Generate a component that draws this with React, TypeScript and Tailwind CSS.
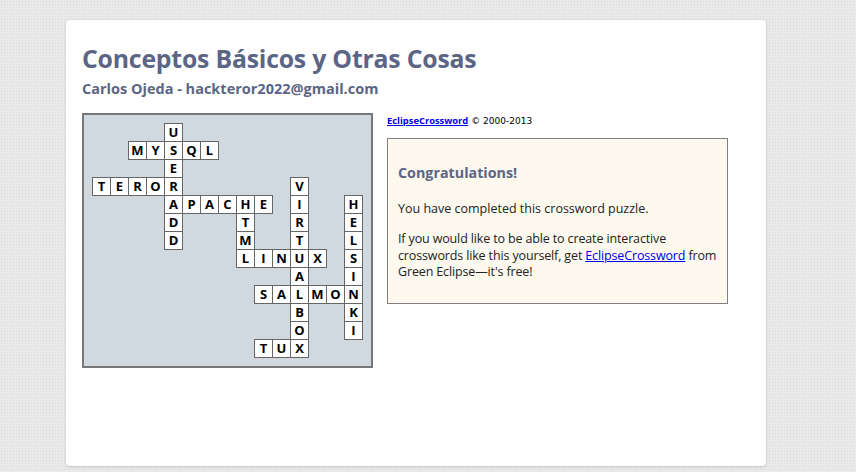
type Cell = { r: number; c: number; ch: string };

const words: { row: number; col: number; dir: 'across' | 'down'; text: string }[] = [
  { row: 0, col: 4, dir: 'down', text: 'USERADD' },
  { row: 1, col: 2, dir: 'across', text: 'MYSQL' },
  { row: 3, col: 0, dir: 'across', text: 'TEROR' },
  { row: 4, col: 4, dir: 'across', text: 'APACHE' },
  { row: 4, col: 8, dir: 'down', text: 'HTML' },
  { row: 7, col: 8, dir: 'across', text: 'LINUX' },
  { row: 3, col: 11, dir: 'down', text: 'VIRTUALBOX' },
  { row: 4, col: 14, dir: 'down', text: 'HELSINKI' },
  { row: 9, col: 9, dir: 'across', text: 'SALMON' },
  { row: 12, col: 9, dir: 'across', text: 'TUX' },
];

function buildCells(): Cell[] {
  const map = new Map<string, Cell>();
  for (const w of words) {
    w.text.split('').forEach((ch, i) => {
      const r = w.dir === 'down' ? w.row + i : w.row;
      const c = w.dir === 'across' ? w.col + i : w.col;
      map.set(`${r}-${c}`, { r, c, ch });
    });
  }
  return Array.from(map.values());
}

const cells = buildCells();

function Crossword() {
  return (
    <div className="shrink-0 border-2 border-[#777] bg-[#d1d9e0] pt-2 pl-2 pr-[9px] pb-[9px]">
      <div className="grid grid-cols-[repeat(15,18px)] grid-rows-[repeat(13,18px)]">
        {cells.map((cell) => (
          <div
            key={`${cell.r}-${cell.c}`}
            className="w-[19px] h-[19px] border border-[#666] bg-white flex items-center justify-center text-[13px] font-bold text-black leading-none"
            style={{ gridRow: cell.r + 1, gridColumn: cell.c + 1 }}
          >
            {cell.ch}
          </div>
        ))}
      </div>
    </div>
  );
}

export default function App() {
  return (
    <div className="min-h-[472px] w-full bg-[#e9e9e9] bg-[radial-gradient(#dadada_1px,transparent_1px)] bg-[length:3px_3px] pt-5 font-['Open_Sans',sans-serif]">
      <div className="ml-[66px] w-[700px] h-[446px] rounded bg-white shadow-[0_1px_3px_rgba(0,0,0,0.15)] px-4 pt-[22px]">
        <h1 className="text-[24.8px] font-bold leading-[32px] text-[#5b6585] tracking-[-0.2px]">
          Conceptos Básicos y Otras Cosas
        </h1>
        <h2 className="mt-[5px] text-[14.5px] font-bold leading-5 text-[#5b6585]">
          Carlos Ojeda - hackteror2022@gmail.com
        </h2>

        <div className="mt-[14px] flex gap-[14px] items-start">
          <Crossword />

          <div className="w-[341px]">
            <div className="text-[9px] leading-[14px] text-black font-['DejaVu_Sans',sans-serif] pt-[1px]">
              <a href="#" className="text-[9.4px] font-bold text-[#0000ee] underline font-['Open_Sans',sans-serif]">
                EclipseCrossword
              </a>{' '}
              © 2000-2013
            </div>
            <div className="mt-[10px] h-[166px] border border-[#808080] bg-[#fdf9ee] pl-[10px] pr-[6px] pt-[24px] text-[#222]">
              <h3 className="text-[14.3px] font-bold leading-5 text-[#5b6585]">Congratulations!</h3>
              <p className="mt-[17px] text-[12.5px] leading-[17px]">
                You have completed this crossword puzzle.
              </p>
              <p className="mt-[14px] text-[12.5px] leading-[16.5px] tracking-[-0.14px]">
                If you would like to be able to create interactive crosswords like this yourself, get{' '}
                <a href="#" className="text-[#0000ee] underline">
                  EclipseCrossword
                </a>{' '}
                from Green Eclipse—it's free!
              </p>
            </div>
          </div>
        </div>
      </div>
    </div>
  );
}
